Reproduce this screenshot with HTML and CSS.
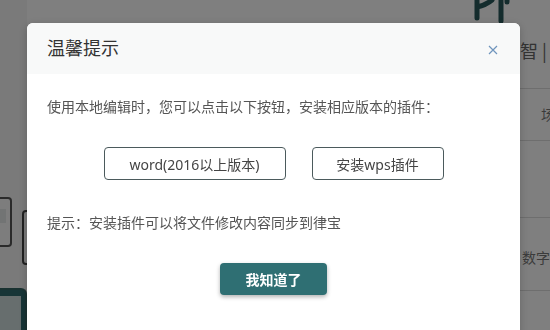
FILE: index.html
```html
<!DOCTYPE html>
<html lang="zh-CN">
<head>
    <meta charset="UTF-8">
    <title>温馨提示</title>
    <link rel="stylesheet" href="styles.css">
</head>
<body>
    <div class="page">
        <div class="side">
            <div class="side-box"><span></span></div>
            <div class="side-active"><span></span></div>
        </div>
        <div class="main">
            <div class="main-top">
                <svg class="logo" width="40" height="24" viewBox="0 0 40 24">
                    <path d="M5 0 L5 18 M5 7 Q14 5 20 0 M29 0 L29 21 M35 0 L35 2" fill="none" stroke="#28595b" stroke-width="5" stroke-linecap="round"/>
                </svg>
            </div>
            <div class="main-card"></div>
        </div>
        <div class="aside">
            <div class="aside-head">智 |</div>
            <div class="aside-row">场</div>
            <div class="aside-row tall"></div>
            <div class="aside-row">数字</div>
            <div class="aside-row"></div>
        </div>
    </div>

    <div class="mask"></div>

    <div class="dialog">
        <div class="dialog-header">
            <span class="dialog-title">温馨提示</span>
            <svg class="dialog-close" width="10" height="10" viewBox="0 0 10 10">
                <path d="M1 1 L9 9 M9 1 L1 9" stroke="#6f95bd" stroke-width="1.2"/>
            </svg>
        </div>
        <div class="dialog-body">
            <p class="dialog-text">使用本地编辑时，您可以点击以下按钮，安装相应版本的插件：</p>
            <div class="plugin-buttons">
                <button class="plugin-btn word">word(2016以上版本)</button>
                <button class="plugin-btn wps">安装wps插件</button>
            </div>
            <p class="dialog-text tip">提示：安装插件可以将文件修改内容同步到律宝</p>
            <div class="dialog-footer">
                <button class="confirm-btn">我知道了</button>
            </div>
        </div>
    </div>
</body>
</html>
```

FILE: styles.css
```css
body {
    margin: 0;
    width: 550px;
    height: 330px;
    overflow: hidden;
    background: #fff;
    font-family: "Noto Sans", "Noto Sans CJK SC", sans-serif;
}

/* page behind the mask */
.page {
    display: flex;
    height: 330px;
}

.side {
    width: 27px;
    flex: 0 0 27px;
    background: #f4f4f4;
    display: flex;
    flex-direction: column;
    padding-top: 197px;
    box-sizing: border-box;
}

.side-box {
    width: 12px;
    height: 50px;
    border: 2px solid #555;
    border-left: none;
    border-radius: 0 4px 4px 0;
    box-sizing: border-box;
    background: #fafafa;
    padding-top: 10px;
}

.side-box span {
    display: block;
    width: 6px;
    height: 14px;
    background: #e4e8e8;
}

.side-active {
    margin-top: 41px;
    flex: 1;
    border: 2px solid #356563;
    border-left: none;
    border-bottom: none;
    border-radius: 0 6px 0 0;
    background: #2f6b6e;
    padding: 6px 4px 0 0;
}

.side-active span {
    display: block;
    height: 100%;
    background: #cfdcdc;
}

.main {
    flex: 1;
    display: flex;
    flex-direction: column;
}

.main-top {
    height: 30px;
    display: flex;
    justify-content: flex-end;
    padding-right: 8px;
}

.main-card {
    margin: 180px 0 0 -5px;
    width: 12px;
    height: 51px;
    border: 2px solid #444;
    border-radius: 4px;
}

.aside {
    width: 30px;
    flex: 0 0 30px;
    overflow: hidden;
    white-space: nowrap;
    font-family: "Noto Sans CJK SC", sans-serif;
    color: #777;
}

.aside-head {
    height: 88px;
    box-sizing: border-box;
    padding-top: 39px;
    font-size: 18px;
    line-height: 22px;
    color: #666;
}

.aside-row {
    height: 52px;
    border-top: 1px solid #dcdcdc;
    box-sizing: border-box;
    font-size: 14px;
    line-height: 50px;
    padding-left: 21px;
}

.aside-row.tall {
    height: 77px;
}

.aside-row:nth-child(4) {
    height: 73px;
    line-height: 78px;
    padding-left: 2px;
}

.mask {
    position: fixed;
    inset: 0;
    background: rgba(0, 0, 0, 0.5);
}

/* dialog */
.dialog {
    position: fixed;
    left: 27px;
    top: 23px;
    width: 493px;
    height: 340px;
    background: #fff;
    border-radius: 6px;
    overflow: hidden;
    box-shadow: 0 2px 10px rgba(0, 0, 0, 0.2);
}

.dialog-header {
    height: 51px;
    background: #f8f9f9;
    display: flex;
    align-items: center;
    justify-content: space-between;
    padding: 0 22px 0 20px;
}

.dialog-title {
    font-family: "Noto Sans CJK SC", sans-serif;
    font-size: 18px;
    line-height: 24px;
    color: #333;
    margin-top: -4px;
}

.dialog-close {
    margin-top: 2px;
}

.dialog-body {
    padding: 23px 20px 0;
}

.dialog-text {
    margin: 0;
    font-size: 14px;
    line-height: 20px;
    color: #555;
}

.plugin-buttons {
    display: flex;
    justify-content: center;
    gap: 26px;
    margin: 30px 0 33px;
}

.plugin-btn {
    height: 33px;
    background: #fff;
    border: 1px solid #4b5a5c;
    border-radius: 4px;
    font-family: "Noto Sans", "Noto Sans CJK SC", sans-serif;
    font-size: 14px;
    color: #444;
    padding: 0;
}

.plugin-btn.word {
    width: 182px;
}

.plugin-btn.wps {
    width: 132px;
}

.dialog-footer {
    display: flex;
    justify-content: center;
    margin-top: 30px;
}

.confirm-btn {
    width: 107px;
    height: 32px;
    background: #2f6f73;
    border: none;
    border-radius: 4px;
    color: #fff;
    font-family: "Noto Sans CJK SC", sans-serif;
    font-size: 14px;
    font-weight: bold;
    box-shadow: 0 2px 4px rgba(0, 0, 0, 0.3);
}
```
